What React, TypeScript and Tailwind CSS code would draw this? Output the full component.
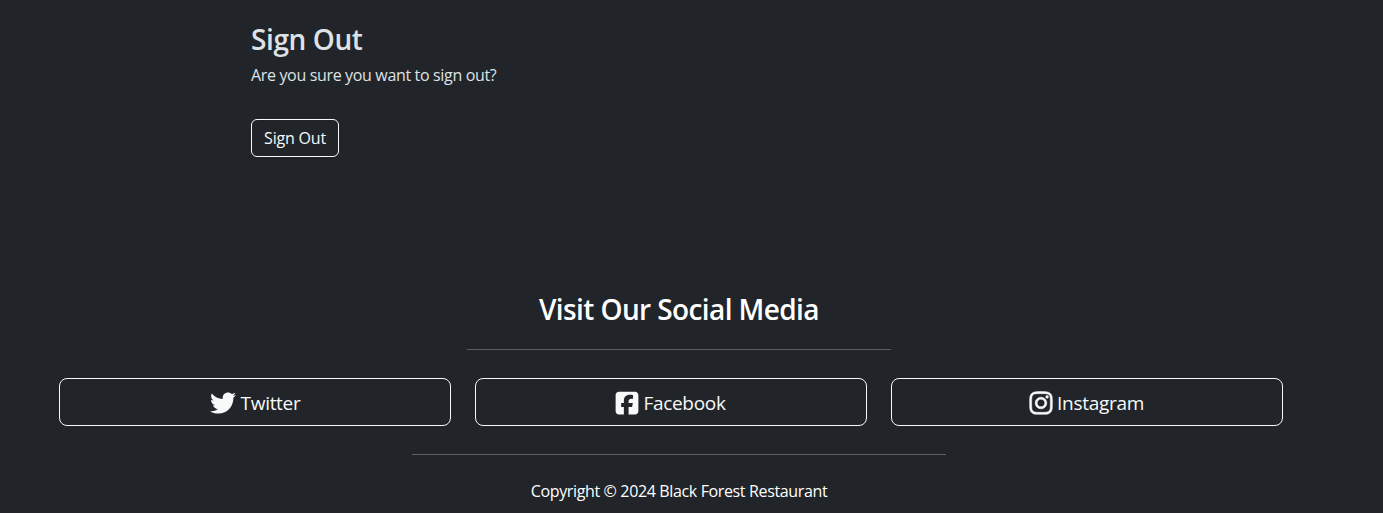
import { FaInstagram, FaSquareFacebook, FaTwitter } from "react-icons/fa6";
import type { ReactNode } from "react";

function SocialLink({ icon, label }: { icon: ReactNode; label: string }) {
  return (
    <a href="#" className="flex h-12 items-center justify-center rounded-lg border border-[#f8f9fa] pt-px text-[#f8f9fa]">
      {icon}
      <span className="whitespace-nowrap text-[19px] leading-[30px] tracking-[-0.3px]">{label}</span>
    </a>
  );
}

export default function App() {
  return (
    <div className="h-[513px] overflow-hidden bg-[#212529] font-['Open_Sans','Noto_Sans',sans-serif] text-[#dee2e6]">
      <main className="h-[292px] pt-[22px] pl-[251px]">
        <h2 className="text-[28px] leading-[34px] font-semibold tracking-[-0.4px]">Sign Out</h2>
        <p className="mt-[7px] text-base leading-6 tracking-[-0.34px]">Are you sure you want to sign out?</p>
        <button className="mt-8 h-[38px] w-[88px] rounded-md border border-[#f8f9fa] text-base tracking-[-0.2px] text-[#f8f9fa]">Sign Out</button>
      </main>
      <footer className="flex w-[1358px] flex-col items-center text-white">
        <h2 className="text-[28px] leading-[34px] font-semibold tracking-[-0.6px]">Visit Our Social Media</h2>
        <hr className="mt-[23px] w-[424px] border-[#5c5f62]" />
        <div className="mt-7 mr-4 grid w-[1224px] grid-cols-3 gap-6">
          <SocialLink icon={<FaTwitter size={26} className="mr-[5px]" />} label="Twitter" />
          <SocialLink icon={<FaSquareFacebook size={26} className="-ml-0.5 mr-[3px]" />} label="Facebook" />
          <SocialLink icon={<FaInstagram size={26} stroke="currentColor" strokeWidth={10} className="-ml-0.5 mr-[3px]" />} label="Instagram" />
        </div>
        <hr className="mt-7 w-[534px] border-[#5c5f62]" />
        <p className="mt-6 text-base leading-6 tracking-[-0.36px]">Copyright © 2024 Black Forest Restaurant</p>
      </footer>
    </div>
  );
}
